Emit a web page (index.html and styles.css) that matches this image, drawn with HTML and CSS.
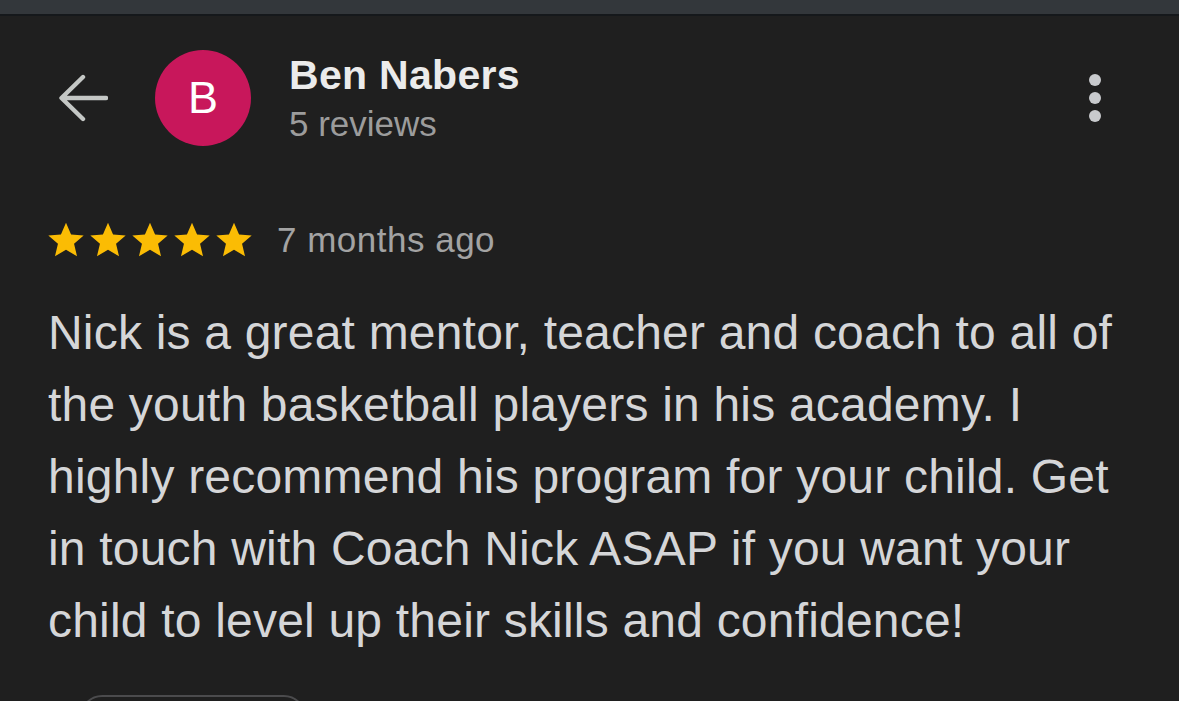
FILE: index.html
```html
<!DOCTYPE html>
<html>
<head>
<meta charset="utf-8">
<link rel="stylesheet" href="styles.css">
</head>
<body>
<div class="statusbar"></div>
<main class="page">
  <header class="header">
    <button class="back" aria-label="Back">
      <svg width="50" height="48" viewBox="0 0 50 48"><path d="M48 24H4M25 3L3.5 24L25 45" fill="none" stroke="#c4c7c5" stroke-width="4.4" stroke-linecap="round" stroke-linejoin="round"/></svg>
    </button>
    <div class="avatar">B</div>
    <div class="who">
      <div class="name">Ben Nabers</div>
      <div class="count">5 reviews</div>
    </div>
    <div class="more" aria-label="More">
      <span></span><span></span><span></span>
    </div>
  </header>
  <div class="meta">
    <div class="stars">
      <svg viewBox="0 0 24 24"><path d="M12 2.2l2.9 6.6 7.2.6-5.5 4.8 1.7 7.1L12 17.5l-6.3 3.8 1.7-7.1-5.5-4.8 7.2-.6z" fill="#fbbc04"/></svg>
      <svg viewBox="0 0 24 24"><path d="M12 2.2l2.9 6.6 7.2.6-5.5 4.8 1.7 7.1L12 17.5l-6.3 3.8 1.7-7.1-5.5-4.8 7.2-.6z" fill="#fbbc04"/></svg>
      <svg viewBox="0 0 24 24"><path d="M12 2.2l2.9 6.6 7.2.6-5.5 4.8 1.7 7.1L12 17.5l-6.3 3.8 1.7-7.1-5.5-4.8 7.2-.6z" fill="#fbbc04"/></svg>
      <svg viewBox="0 0 24 24"><path d="M12 2.2l2.9 6.6 7.2.6-5.5 4.8 1.7 7.1L12 17.5l-6.3 3.8 1.7-7.1-5.5-4.8 7.2-.6z" fill="#fbbc04"/></svg>
      <svg viewBox="0 0 24 24"><path d="M12 2.2l2.9 6.6 7.2.6-5.5 4.8 1.7 7.1L12 17.5l-6.3 3.8 1.7-7.1-5.5-4.8 7.2-.6z" fill="#fbbc04"/></svg>
    </div>
    <span class="when">7 months ago</span>
  </div>
  <p class="review">Nick is a great mentor, teacher and coach to all of the youth basketball players in his academy. I highly recommend his program for your child. Get in touch with Coach Nick ASAP if you want your child to level up their skills and confidence!</p>
  <div class="pill"></div>
</main>
</body>
</html>
```
FILE: styles.css
```css
html, body {
  margin: 0;
  padding: 0;
  background: #1f1f1f;
  height: 100%;
  overflow: hidden;
}
body {
  font-family: "Liberation Sans", Arial, sans-serif;
}
.statusbar {
  height: 14px;
  background: #33373b;
  border-bottom: 2px solid #15181b;
}
.page {
  padding: 0 0 0 48px;
  height: 685px;
  overflow: hidden;
}
.header {
  display: flex;
  align-items: center;
  height: 164px;
}
.back {
  background: none;
  border: 0;
  padding: 0;
  margin-left: 10px;
  width: 50px;
  height: 48px;
  display: flex;
}
.avatar {
  width: 96px;
  height: 96px;
  border-radius: 50%;
  background: #c8175b;
  color: #fff;
  font-size: 45px;
  display: flex;
  align-items: center;
  justify-content: center;
  margin-left: 47px;
  flex: none;
}
.who {
  margin-left: 38px;
  flex: 1;
  display: flex;
  flex-direction: column;
  gap: 7px;
}
.name {
  color: #ebebeb;
  font-weight: bold;
  font-size: 41px;
  line-height: 44px;
  letter-spacing: 0.3px;
}
.count {
  color: #9c9c9c;
  font-size: 35px;
  line-height: 40px;
}
.more {
  display: flex;
  flex-direction: column;
  gap: 6px;
  margin-right: 78px;
}
.more span {
  width: 12px;
  height: 12px;
  border-radius: 50%;
  background: #c8cacd;
}
.meta {
  display: flex;
  align-items: center;
  gap: 22px;
  margin: 39px 0 0 -3px;
  height: 42px;
}
.stars {
  display: flex;
}
.stars svg {
  width: 42px;
  height: 42px;
  display: block;
}
.when {
  color: #a3a3a3;
  font-size: 35px;
  letter-spacing: 0.5px;
}
.review {
  margin: 36px 0 0;
  color: #d5d6d8;
  font-size: 48px;
  line-height: 72px;
  letter-spacing: 0.2px;
  width: 1085px;
}
.pill {
  margin: 38px 0 0 32px;
  width: 222px;
  height: 40px;
  border: 2px solid #4b4b4d;
  border-radius: 22px;
}
```
